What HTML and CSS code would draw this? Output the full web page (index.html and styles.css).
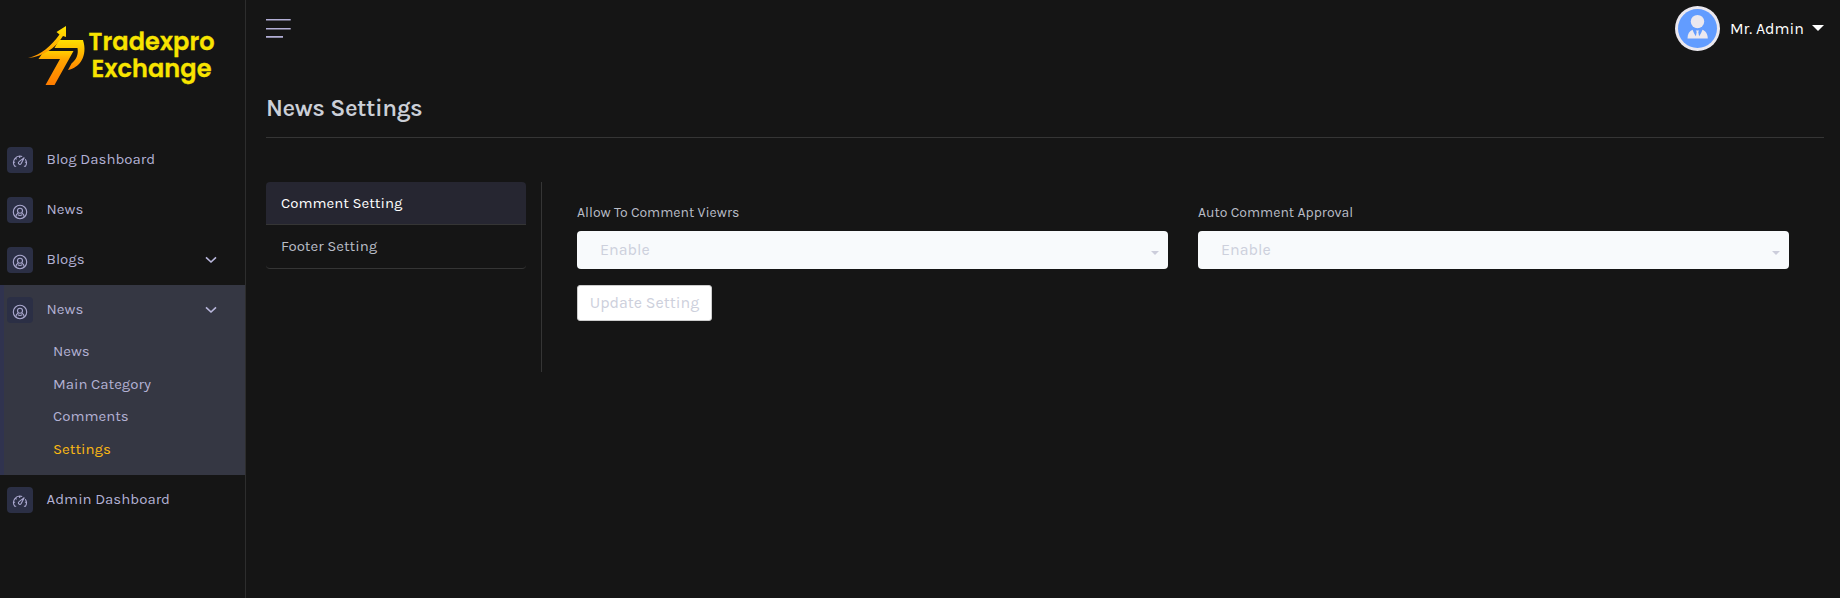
FILE: index.html
```html
<!DOCTYPE html>
<html lang="en">
<head>
<meta charset="utf-8">
<title>News Settings</title>
<link rel="stylesheet" href="styles.css">
</head>
<body>
<svg class="defs" aria-hidden="true">
  <symbol id="gauge" viewBox="0 0 16 14">
    <path d="M4.200 12.300H2.700A6.500 6.500 0 0 1 10.200 2.500M13.300 5.200A6.500 6.500 0 0 1 13.500 12.300H11.900M7.700 2.300v1.600M3.600 4.300l1 1M1.600 8.300h1.500M14.400 8.300h-1.500"/>
    <path d="M12.300 3.600 9.200 9.600A1.500 1.500 0 1 1 7.100 7.600z"/>
  </symbol>
  <symbol id="user" viewBox="0 0 16 16">
    <circle cx="8" cy="8" r="6.7"/><circle cx="8" cy="6.8" r="2.5"/>
    <path d="M3.700 12.900c.2-2 1.200-3.100 2.600-3.800M12.300 12.900c-.2-2-1.200-3.100-2.600-3.800M5.900 10.800c1.200.8 3 .8 4.200 0"/>
  </symbol>
  <symbol id="chevron" viewBox="0 0 12 8"><path d="M1 1.300 6 6l5-4.700"/></symbol>
</svg>
<div class="app">
  <aside class="sidebar">
    <a class="brand">
      <svg width="245" height="135" viewBox="0 0 245 135">
        <defs>
          <linearGradient id="gold" gradientUnits="userSpaceOnUse" x1="0" y1="26" x2="0" y2="62">
            <stop offset="0" stop-color="#ffe600"/><stop offset="1" stop-color="#ff8a00"/></linearGradient>
          <linearGradient id="amber" gradientUnits="userSpaceOnUse" x1="0" y1="49" x2="0" y2="85">
            <stop offset="0" stop-color="#ffd800"/><stop offset=".3" stop-color="#ffa400"/><stop offset="1" stop-color="#ff7c00"/></linearGradient>
          <linearGradient id="arc" gradientUnits="userSpaceOnUse" x1="0" y1="40" x2="0" y2="70">
            <stop offset="0" stop-color="#ffe000"/><stop offset="1" stop-color="#ff8400"/></linearGradient>
        </defs>
        <path fill="url(#amber)" d="M44 51H73.500L54.500 85H45.500L60 59H38.500z"/>
        <path fill="url(#arc)" d="M59 40H83C88 56 80 67.500 68 70L71.500 63.500C77 59 78.500 54 77.500 48H54.500z"/>
        <path fill="url(#gold)" d="M28 58C42 54.500 51 46 59.500 34.500L56.500 32 66 26V37L63 36C55 49 43 56.500 28 58z"/>
        <g class="brand-text">
          <text x="88.500" y="49.500" textLength="126">Tradexpro</text>
          <text x="91.500" y="77" textLength="120">Exchange</text>
        </g>
      </svg>
    </a>
    <nav class="menu">
      <a class="item"><span class="tile"><svg class="ico gauge"><use href="#gauge"/></svg></span><span class="name">Blog Dashboard</span></a>
      <a class="item"><span class="tile"><svg class="ico"><use href="#user"/></svg></span><span class="name">News</span></a>
      <a class="item"><span class="tile"><svg class="ico"><use href="#user"/></svg></span><span class="name">Blogs</span><svg class="chev"><use href="#chevron"/></svg></a>
      <div class="group">
        <a class="item"><span class="tile"><svg class="ico"><use href="#user"/></svg></span><span class="name">News</span><svg class="chev"><use href="#chevron"/></svg></a>
        <div class="sub">
          <a>News</a><a>Main Category</a><a>Comments</a><a class="current">Settings</a>
        </div>
      </div>
      <a class="item"><span class="tile"><svg class="ico gauge"><use href="#gauge"/></svg></span><span class="name">Admin Dashboard</span></a>
    </nav>
  </aside>
  <main class="main">
    <header class="topbar">
      <svg class="burger" width="25" height="20" viewBox="0 0 25 20"><path d="M0 1.800h24.700M0 10.800h24.700M0 18.900h17"/></svg>
      <div class="profile">
        <svg width="45" height="45" viewBox="0 0 45 45">
          <circle cx="22.500" cy="22.500" r="22.500" fill="#ebe8ef"/><circle cx="22.500" cy="22.500" r="19.500" fill="#629cff"/>
          <circle cx="22.500" cy="15.600" r="6.700" fill="#ebe8ef"/>
          <path fill="#ebe8ef" d="M12.500 32.500c0-4.500 2-7.500 5-8.700 1 2.500 2 4.800 3.400 6.400l.8-4.200-.7-1.500h3l-.7 1.500.8 4.200c1.400-1.600 2.400-3.900 3.400-6.400 3 1.200 5.300 4.200 5.300 8.700z"/>
        </svg>
        <span>Mr. Admin</span>
        <svg width="12" height="6" viewBox="0 0 12 6"><path d="M0 0h12L6 6z" fill="#fff"/></svg>
      </div>
    </header>
    <h1 class="title">News Settings</h1>
    <div class="content">
      <div class="tabs"><a class="tab active">Comment Setting</a><a class="tab">Footer Setting</a></div>
      <form class="form">
        <div class="fields">
          <label class="field">Allow To Comment Viewrs
            <span class="select">Enable<svg width="8" height="4" viewBox="0 0 8 4"><path d="M0 0h8L4 4z"/></svg></span></label>
          <label class="field">Auto Comment Approval
            <span class="select">Enable<svg width="8" height="4" viewBox="0 0 8 4"><path d="M0 0h8L4 4z"/></svg></span></label>
        </div>
        <button type="button" class="update">Update Setting</button>
      </form>
    </div>
  </main>
</div>
</body>
</html>
```
FILE: styles.css
```css
* { box-sizing: border-box; }
body { margin: 0; background: #151515; color: #b4b8d7; font-family: Karla, Roboto, sans-serif; font-size: 15px; }
svg { display: block; flex: none; }
.defs { width: 0; height: 0; position: absolute; }
.app { display: flex; height: 598px; overflow: hidden; }
.sidebar { width: 246px; flex: none; border-right: 1px solid #2d2d2d; }
.brand { display: block; height: 135px; }
.brand-text { font-family: Poppins, Inter, sans-serif; font-weight: 600; font-size: 24px; fill: #f8e400; stroke: #f8e400; stroke-width: .3; }
.menu { color: #b3b1d4; }
.item { display: flex; align-items: center; height: 50px; padding: 0 28px 0 7px; }
.tile { width: 26px; height: 26px; border-radius: 4px; background: #2b2f45; display: flex; justify-content: center; padding-top: 7px; margin-right: 13.6px; }
.ico { width: 16px; height: 16px; fill: none; stroke: #aaa8cf; stroke-width: 1.1; }
.ico.gauge { height: 14px; }
.name { flex: 1; line-height: 20px; padding-bottom: 3px; }
.chev { width: 12px; height: 8px; fill: none; stroke: #b9b7dc; stroke-width: 1.6; }
.group { height: 190px; background: linear-gradient(90deg, #30334f 4px, #353743 4px); }
.sub { padding: 0 0 0 53px; }
.sub a { display: block; height: 32.5px; line-height: 32.5px; }
.sub .current { color: #fcb913; }
.main { flex: 1; padding: 0 16px 0 20px; }
.topbar { height: 57px; display: flex; justify-content: space-between; align-items: center; }
.burger { fill: none; stroke: #b2aed5; stroke-width: 1.6; margin-bottom: 1px; }
.profile { display: flex; align-items: center; color: #fff; font-size: 16px; padding-bottom: 1px; }
.profile span { margin: 0 8px 0 10px; }
.title { margin: 0; height: 81px; padding-top: 34px; line-height: 34px; border-bottom: 1px solid #353535; font-size: 24px; font-weight: 600; letter-spacing: -.4px; color: #cbcfd7; }
.content { display: flex; padding-top: 44px; }
.tabs { width: 276px; height: 190px; padding-right: 15px; border-right: 1px solid #353535; color: #b9bdc7; }
.tab { display: block; height: 44px; line-height: 43px; padding-left: 15px; border-bottom: 1px solid #353535; border-radius: 4px; }
.tab.active { height: 43px; background: #262631; color: #fff; border-radius: 4px 4px 0 0; }
.form { flex: 1; padding: 20px 35px 0; }
.fields { display: flex; gap: 30px; }
.field { flex: 1; font-size: 14px; line-height: 21px; color: #b9bdc7; }
.select { display: flex; justify-content: space-between; align-items: center; height: 38px; margin-top: 8px; padding: 0 9px 2px 23px; border-radius: 4px; background: #f8fafc; color: #cdd0dc; font-size: 16px; }
.select svg { margin-top: 8px; fill: #cccddb; }
.update { display: block; width: 135px; height: 36px; margin-top: 16px; padding: 0 0 2px; border: 1px solid #ccc; border-radius: 3px; background: #fff; color: #cdd0dc; font: 16px Karla, Roboto, sans-serif; }
```
